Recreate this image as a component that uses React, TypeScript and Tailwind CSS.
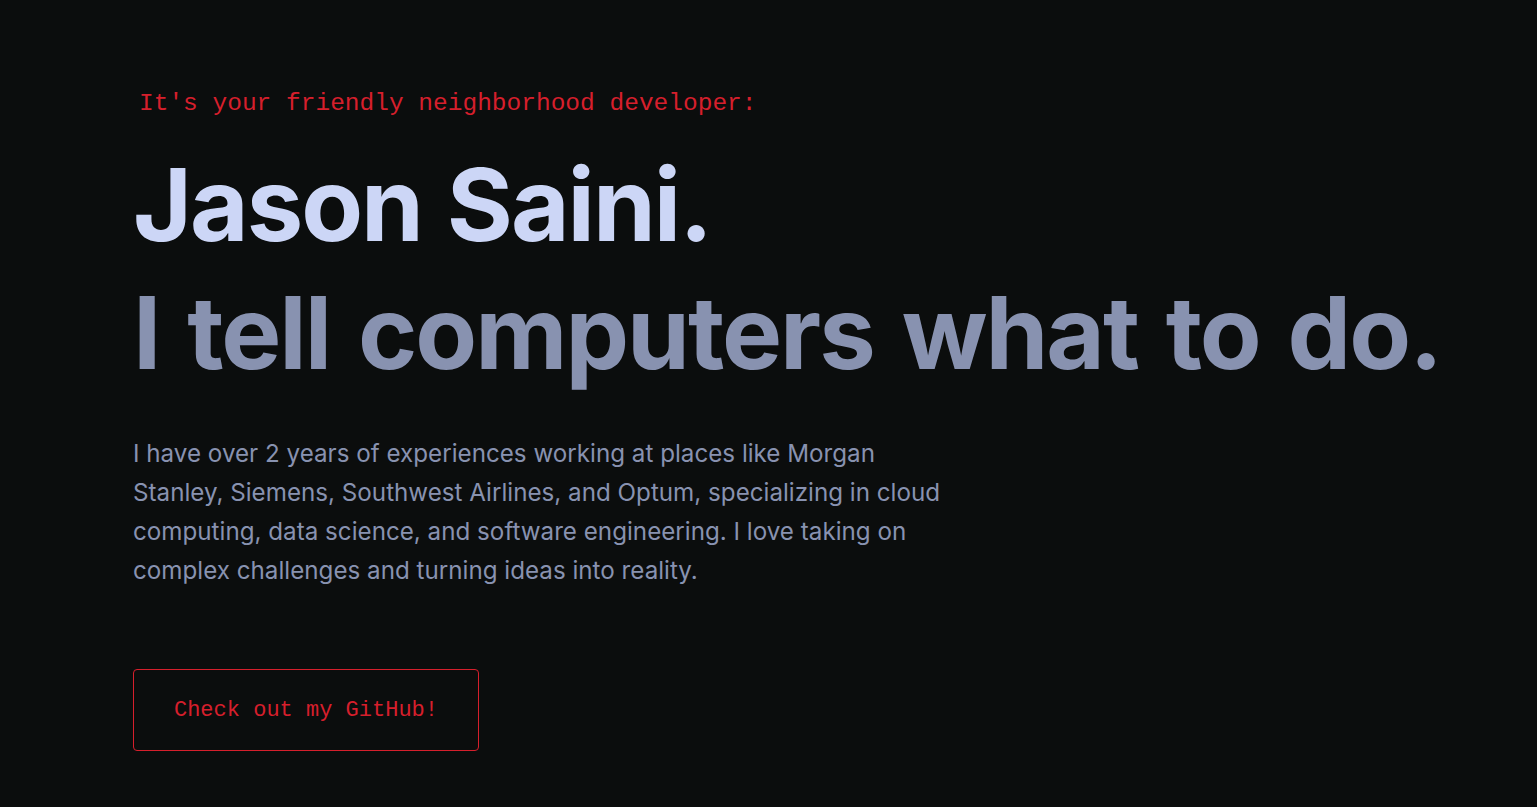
export default function App() {
  return (
    <main className="min-h-screen w-full bg-[#0b0d0d] overflow-hidden">
      <section className="pl-[133px] pt-[86px] flex flex-col items-start">
        {/* intro line */}
        <p className="ml-[6px] text-[24.5px] leading-[36px] text-[#d61f2c] font-['Liberation_Mono','DejaVu_Sans_Mono',monospace]">
          It's your friendly neighborhood developer:
        </p>

        <h1 className="mt-[18px] font-['Inter',sans-serif] font-bold text-[101px] leading-[128px] tracking-[-0.02em] [word-spacing:3px] text-[#ccd6f6] whitespace-nowrap">
          Jason Saini.
        </h1>
        <h2 className="font-['Inter',sans-serif] font-bold text-[101px] leading-[128px] tracking-[-0.02em] [word-spacing:6px] text-[#8892b0] whitespace-nowrap">
          I tell computers what to do.
        </h2>

        <p className="mt-[38px] font-['Inter',sans-serif] text-[24.2px] leading-[39px] text-[#8892b0] whitespace-nowrap">
          I have over 2 years of experiences working at places like Morgan
          <br />
          Stanley, Siemens, Southwest Airlines, and Optum, specializing in cloud
          <br />
          computing, data science, and software engineering. I love taking on
          <br />
          complex challenges and turning ideas into reality.
        </p>

        <a
          href="#"
          className="mt-[79px] flex items-center justify-center w-[346px] h-[82px] rounded-[4px] border border-[#d61f2c] text-[#d61f2c] text-[22px] font-['Liberation_Mono','DejaVu_Sans_Mono',monospace]"
        >
          Check out my GitHub!
        </a>
      </section>
    </main>
  );
}
